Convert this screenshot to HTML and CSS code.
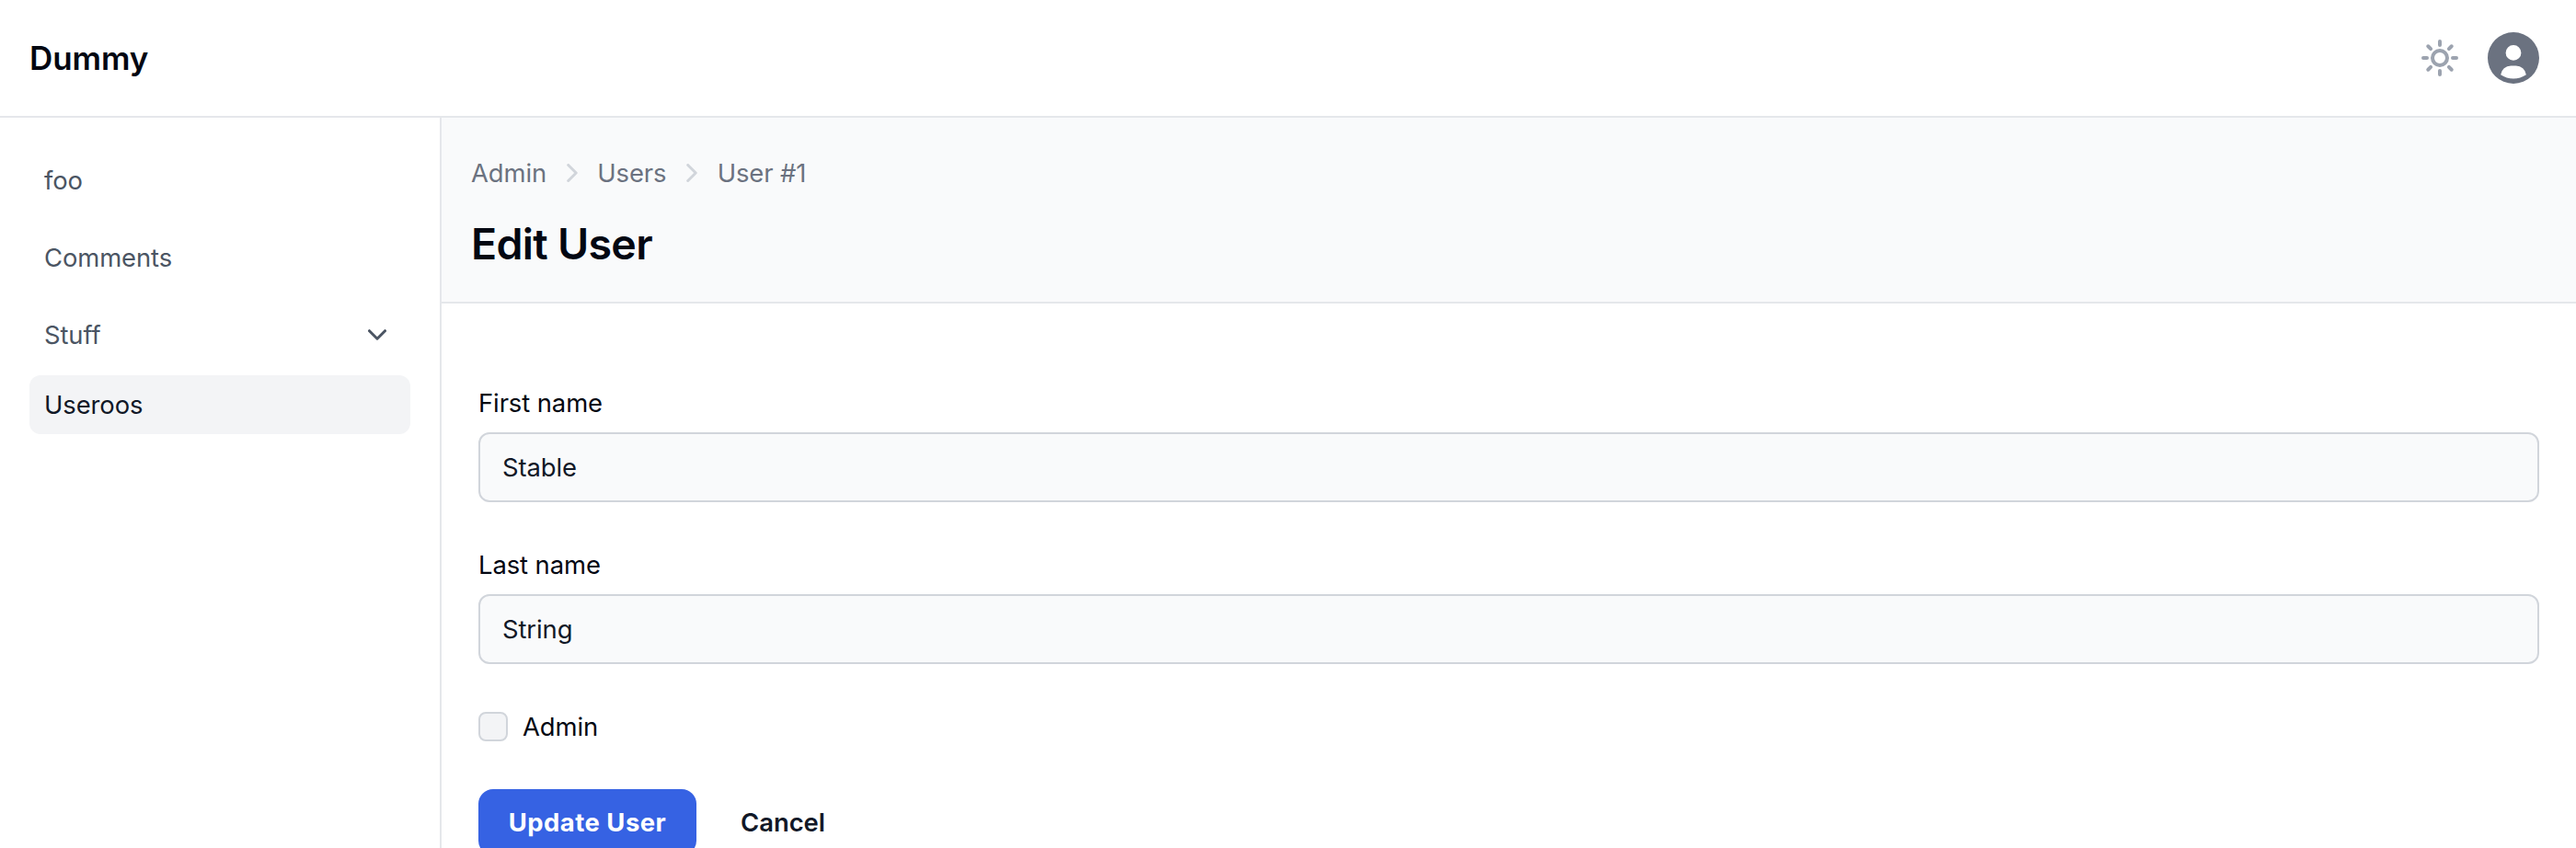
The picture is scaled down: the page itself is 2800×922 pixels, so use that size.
FILE: index.html
```html
<!DOCTYPE html>
<html lang="en">
<head>
<meta charset="utf-8">
<title>Edit User</title>
<link rel="stylesheet" href="styles.css">
</head>
<body>
<header class="topbar">
  <a class="brand">Dummy</a>
  <div class="topbar-actions">
    <svg class="icon-sun" viewBox="0 0 24 24" fill="none" stroke="currentColor" stroke-width="2" stroke-linecap="round" stroke-linejoin="round"><path d="M12 5V3m0 18v-2M7.05 7.05 5.636 5.636m12.728 12.728L16.95 16.95M5 12H3m18 0h-2M7.05 16.95l-1.414 1.414M18.364 5.636 16.95 7.05M16 12a4 4 0 1 1-8 0 4 4 0 0 1 8 0Z"/></svg>
    <svg class="icon-user" viewBox="0 0 20 20" fill="currentColor"><path d="M10 0a10 10 0 1 0 10 10A10.011 10.011 0 0 0 10 0Zm0 5a3 3 0 1 1 0 6 3 3 0 0 1 0-6Zm0 13a8.949 8.949 0 0 1-4.951-1.488A3.987 3.987 0 0 1 9 13h2a3.987 3.987 0 0 1 3.951 3.512A8.949 8.949 0 0 1 10 18Z"/></svg>
  </div>
</header>
<div class="shell">
  <nav class="sidebar">
    <a class="nav-item">foo</a>
    <a class="nav-item">Comments</a>
    <a class="nav-item nav-group">Stuff
      <svg class="icon-down" viewBox="0 0 10 6" fill="none" stroke="currentColor" stroke-width="1.5" stroke-linecap="round" stroke-linejoin="round"><path d="m.75.85 4.25 4.25 4.25-4.25"/></svg>
    </a>
    <a class="nav-item active">Useroos</a>
  </nav>
  <main class="content">
    <div class="page-head">
      <div class="breadcrumb">
        <span>Admin</span>
        <svg class="icon-next" viewBox="0 0 6 10" fill="none" stroke="currentColor" stroke-width="1.5" stroke-linecap="round" stroke-linejoin="round"><path d="m.85 9.25 4.25-4.25-4.25-4.25"/></svg>
        <span>Users</span>
        <svg class="icon-next" viewBox="0 0 6 10" fill="none" stroke="currentColor" stroke-width="1.5" stroke-linecap="round" stroke-linejoin="round"><path d="m.85 9.25 4.25-4.25-4.25-4.25"/></svg>
        <span>User #1</span>
      </div>
      <h1 class="title">Edit User</h1>
    </div>
    <form class="form">
      <div class="field">
        <label class="label" for="first">First name</label>
        <input class="input" id="first" type="text" value="Stable">
      </div>
      <div class="field">
        <label class="label" for="last">Last name</label>
        <input class="input" id="last" type="text" value="String">
      </div>
      <label class="check"><input class="checkbox" type="checkbox">Admin</label>
      <div class="actions">
        <button class="btn btn-primary" type="button">Update User</button>
        <button class="btn" type="button">Cancel</button>
      </div>
    </form>
  </main>
</div>
</body>
</html>
```
FILE: styles.css
```css
* { box-sizing: border-box; }
body {
  margin: 0;
  height: 922px;
  overflow: hidden;
  background: #fff;
  color: #030712;
  font: 400 27.4px/40px Inter, "Liberation Sans", sans-serif;
  letter-spacing: -0.08px;
}
svg { display: block; flex: none; }
.topbar {
  display: flex;
  align-items: center;
  justify-content: space-between;
  height: 128px;
  padding: 0 40px 0 32px;
  border-bottom: 2px solid #e5e7eb;
}
.brand { font-size: 35px; font-weight: 600; letter-spacing: -0.1px; }
.topbar-actions { display: flex; align-items: center; gap: 28px; }
.icon-sun { width: 48px; height: 48px; color: #9ca3af; }
.icon-user { width: 56px; height: 56px; color: #6b7280; }
.shell { display: flex; height: 794px; }
.sidebar {
  flex: none;
  width: 480px;
  padding: 36px 32px;
  border-right: 2px solid #e5e7eb;
}
.nav-item {
  display: flex;
  align-items: center;
  height: 64px;
  margin-bottom: 20px;
  padding: 0 16px;
  border-radius: 12px;
  color: #4b5563;
}
.nav-group { justify-content: space-between; margin-bottom: 12px; padding-right: 26px; }
.active { background: #f3f4f6; color: #111827; }
.icon-down { width: 20px; height: 12px; }
.content { flex: 1; }
.page-head {
  height: 202px;
  padding: 40px 32px 0;
  background: #f9fafb;
  border-bottom: 2px solid #e5e7eb;
}
.breadcrumb { display: flex; align-items: center; gap: 21.6px; color: #6b7280; }
.icon-next { width: 12px; height: 20px; color: #d1d5db; }
.title { margin: 25px 0 0; font-size: 46.5px; line-height: 64px; font-weight: 600; letter-spacing: -0.7px; }
.form { padding: 88px 40px 0; }
.field { margin-bottom: 48px; }
.label { display: block; margin-bottom: 12px; }
.input {
  display: block;
  width: 100%;
  height: 76px;
  margin: 0;
  padding: 0 24px;
  border: 2px solid #d1d5db;
  border-radius: 12px;
  background: #f9fafb;
  color: #111827;
  font: inherit;
  letter-spacing: inherit;
}
.check { display: flex; align-items: center; gap: 16px; }
.checkbox {
  appearance: none;
  width: 32px;
  height: 32px;
  margin: 0;
  border: 2px solid #d1d5db;
  border-radius: 8px;
  background: #f3f4f6;
}
.actions { display: flex; gap: 16px; margin-top: 48px; }
.btn {
  height: 72px;
  padding: 0 32px;
  border: 0;
  border-radius: 16px;
  background: none;
  color: #111827;
  font: inherit;
  font-weight: 600;
  letter-spacing: 0;
}
.btn-primary {
  width: 237px;
  padding: 0;
  background: #3662e3;
  color: #fff;
  font-weight: 700;
  letter-spacing: 0.5px;
  white-space: nowrap;
}
```
